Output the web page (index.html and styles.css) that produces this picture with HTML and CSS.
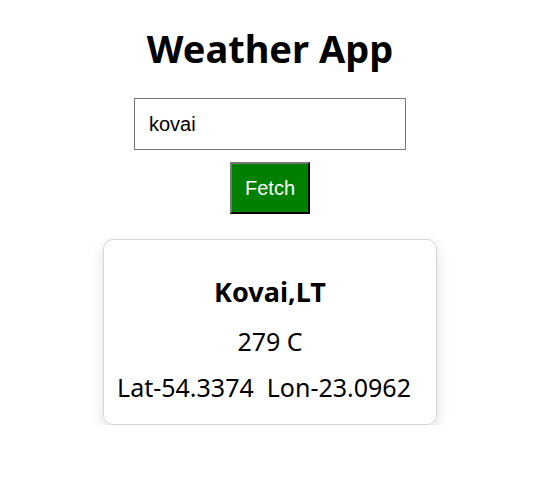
FILE: index.html
```html
<!DOCTYPE html>
<html>
<head>
<meta charset="utf-8">
<link rel="stylesheet" href="styles.css">
</head>
<body>
<div class="app">
  <h1 class="title">Weather App</h1>
  <input class="search" type="text" value="kovai">
  <button class="fetch">Fetch</button>
  <div class="card">
    <h2 class="city">Kovai,LT</h2>
    <p class="temp">279 C</p>
    <p class="coords">Lat-54.3374&nbsp; Lon-23.0962</p>
  </div>
</div>
</body>
</html>
```
FILE: styles.css
```css
body {
  margin: 0;
  background: #fff;
  font-family: "Noto Sans", "Open Sans", sans-serif;
}
.app {
  display: flex;
  flex-direction: column;
  align-items: center;
  padding-right: 3px;
  padding-top: 22px;
}
.title {
  margin: 0;
  font-size: 38px;
  font-weight: 700;
  line-height: 52px;
  color: #000;
}
.search {
  margin-top: 24px;
  box-sizing: border-box;
  width: 272px;
  height: 52px;
  padding: 0 14px;
  border: 1px solid #767676;
  font-family: "Liberation Sans", Arial, sans-serif;
  font-size: 20px;
  color: #000;
  outline: none;
}
.fetch {
  margin-top: 12px;
  box-sizing: border-box;
  width: 80px;
  height: 52px;
  background: #008000;
  color: #fff;
  border: 2px outset #767676;
  border-color: #767676 #000 #000 #767676;
  font-family: "Liberation Sans", Arial, sans-serif;
  font-size: 20px;
  padding: 0;
}
.card {
  margin-top: 25px;
  box-sizing: border-box;
  width: 334px;
  height: 186px;
  border: 1px solid #d6d6d6;
  border-radius: 10px;
  box-shadow: 0 6px 14px rgba(0,0,0,0.13);
  display: flex;
  flex-direction: column;
  align-items: center;
  padding-top: 34px;
}
.city {
  margin: 0;
  font-size: 27px;
  font-weight: 700;
  line-height: 36px;
}
.temp {
  margin: 15px 0 0;
  font-size: 25px;
  line-height: 32px;
}
.coords {
  margin: 14px 0 0;
  padding-right: 12px;
  font-size: 25px;
  line-height: 32px;
  white-space: nowrap;
}
```
